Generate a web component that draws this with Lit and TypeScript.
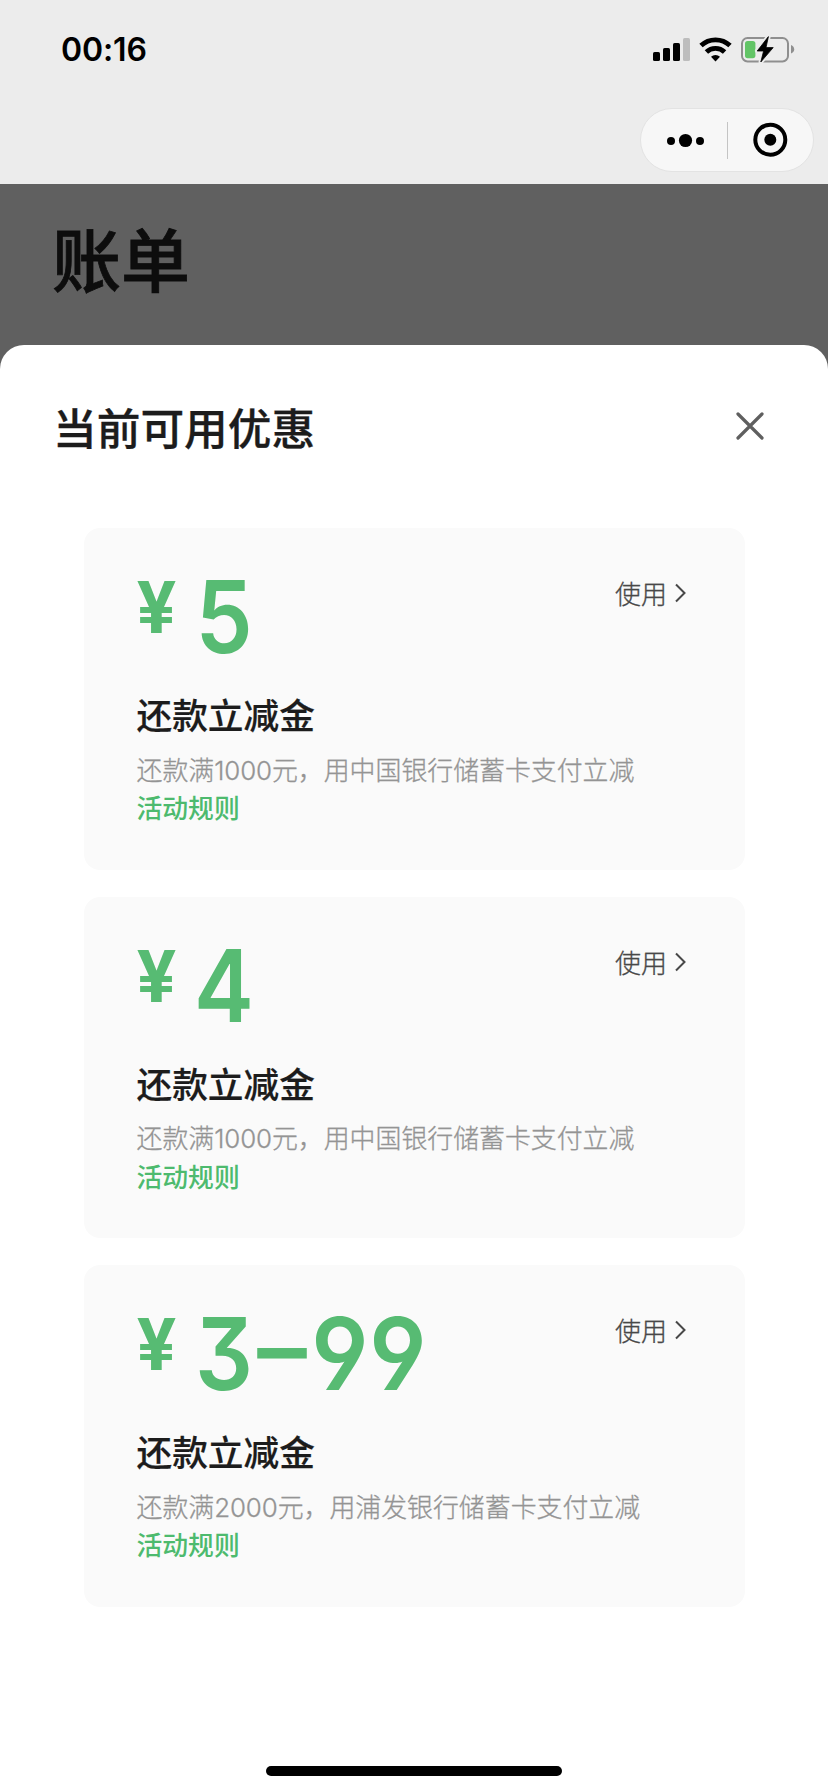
import { LitElement, html, css, svg } from "lit";
import { customElement, property } from "lit/decorators.js";
import { classMap } from "lit/directives/class-map.js";

interface Coupon {
  amount: string;
  title: string;
  before: string;
  threshold: string;
  after: string;
}

const coupons: Coupon[] = [
  { amount: "5", title: "还款立减金", before: "还款满", threshold: "1000", after: "元，用中国银行储蓄卡支付立减" },
  { amount: "4", title: "还款立减金", before: "还款满", threshold: "1000", after: "元，用中国银行储蓄卡支付立减" },
  { amount: "3–99", title: "还款立减金", before: "还款满", threshold: "2000", after: "元，用浦发银行储蓄卡支付立减" },
];

@customElement("status-bar")
class StatusBar extends LitElement {
  static styles = css`
    :host {
      display: flex;
      justify-content: space-between;
      height: 100px;
      padding: 0 30px 0 61px;
      box-sizing: border-box;
    }
    .time {
      font: 600 32px/40px Inter, "Liberation Sans", sans-serif;
      letter-spacing: -0.1px;
      margin-top: 30px;
      color: #000;
    }
    .icons {
      margin-top: 32px;
      width: 146px;
      height: 34px;
    }
  `;
  render() {
    return html`
      <span class="time">00:16</span>
      <svg class="icons" viewBox="652 32 146 34">
        ${svg`
          <rect x="653" y="52" width="7" height="9" rx="1.6" />
          <rect x="663" y="48" width="7" height="13" rx="1.6" />
          <rect x="673" y="43" width="7" height="18" rx="1.6" />
          <rect x="683" y="38" width="7" height="23" rx="1.6" fill="#bdbdbd" />
          <g fill="none" stroke="#000" stroke-width="4.8">
            <path d="M701 45.6 A21 21 0 0 1 730 45.6" />
            <path d="M706.4 52 A13 13 0 0 1 724.6 52" />
          </g>
          <path d="M711 56.8 A6.6 6.6 0 0 1 720 56.8 L715.5 61.4 Z" />
          <rect x="742" y="38" width="46" height="23.4" rx="5.5" fill="none" stroke="#8f8f8f" stroke-width="2" />
          <path d="M791 45 Q794.2 46.3 794.2 49.3 Q794.2 52.3 791 53.4 Z" fill="#8f8f8f" />
          <rect x="745" y="41" width="10.4" height="17.2" rx="2.6" fill="#62c466" />
          <path d="M768.4 36.6 L757.2 51 L763.6 51 L760.8 62 L773.2 47.6 L766 47.6 Z"
            stroke="#ececec" stroke-width="4.5" stroke-linejoin="round" />
          <path d="M768.4 36.6 L757.2 51 L763.6 51 L760.8 62 L773.2 47.6 L766 47.6 Z"
            stroke="#000" stroke-width="0.8" stroke-linejoin="round" />
        `}
      </svg>
    `;
  }
}

@customElement("mini-capsule")
class MiniCapsule extends LitElement {
  static styles = css`
    :host {
      display: flex;
      justify-content: flex-end;
      padding: 8px 14px 0 0;
    }
    .capsule {
      display: grid;
      grid-template-columns: 86px 1px 1fr;
      align-items: center;
      width: 174px;
      height: 64px;
      box-sizing: border-box;
      border: 1px solid #e3e3e3;
      border-radius: 32px;
      background: #f7f7f7;
    }
    .line {
      height: 37px;
      background: #c4c4c4;
    }
    .glyph {
      display: block;
      width: 100%;
      height: 62px;
    }
  `;
  render() {
    return html`
      <div class="capsule">
        <svg class="glyph" viewBox="0 0 86 62">
          <circle cx="30" cy="32" r="4" />
          <circle cx="44.5" cy="31.5" r="6.6" />
          <circle cx="59" cy="32" r="4" />
        </svg>
        <div class="line"></div>
        <svg class="glyph" viewBox="0 0 85 62">
          <circle cx="42.3" cy="30.7" r="15" fill="none" stroke="#000" stroke-width="4" />
          <circle cx="42.3" cy="30.7" r="6" />
        </svg>
      </div>
    `;
  }
}

@customElement("coupon-card")
class CouponCard extends LitElement {
  @property({ attribute: false }) coupon!: Coupon;

  static styles = css`
    :host {
      display: block;
      height: 341.5px;
      box-sizing: border-box;
      padding: 38px 58px 0 52.5px;
      border-radius: 16px;
      background: #fafafa;
    }
    .top {
      display: flex;
      justify-content: space-between;
      align-items: flex-start;
      height: 123px;
    }
    .price {
      display: flex;
      color: #57bb73;
    }
    .sign {
      width: 58px;
      font: 700 72px/86px Roboto, sans-serif;
      transform: scaleX(1.01);
      transform-origin: left;
    }
    .amount {
      display: flex;
      margin-left: 0.5px;
      font: 600 101px/100px Inter, "Liberation Sans", sans-serif;
      font-feature-settings: "cv04" 1, "cv09" 1, "case" 1;
    }
    .digit {
      width: 58px;
      display: flex;
      justify-content: center;
      transform: scaleX(0.9);
    }
    .digit.four {
      transform: scaleX(0.89);
    }
    .digit.nine {
      transform: scaleX(0.94);
    }
    .digit.dash {
      transform: scaleX(0.98);
    }
    .use {
      display: flex;
      align-items: center;
      gap: 7px;
      height: 44px;
      margin-top: 5px;
      font: 300 26px/44px "Noto Sans CJK SC", sans-serif;
      -webkit-text-stroke: 0.3px #484848;
      color: #484848;
    }
    .chevron {
      width: 13px;
      height: 22px;
    }
    .title {
      font: 500 35.7px/50px "Noto Sans CJK SC", sans-serif;
      -webkit-text-stroke: 0.2px #1c1c1c;
      color: #1c1c1c;
    }
    .desc {
      font: 300 25.9px/38px "Noto Sans CJK SC", sans-serif;
      -webkit-text-stroke: 0.3px #949494;
      color: #949494;
      margin-top: 10.5px;
      white-space: nowrap;
    }
    .num {
      font-family: Inter, sans-serif;
      letter-spacing: -0.1px;
    }
    .rule {
      font: 500 25.8px/38px "Noto Sans CJK SC", sans-serif;
      color: #4dba6e;
      margin-top: -1.5px;
    }
  `;
  render() {
    const c = this.coupon;
    return html`
      <div class="top">
        <div class="price">
          <span class="sign">¥</span>
          <span class="amount"
            >${[...c.amount].map(
              (d) =>
                html`<span class=${classMap({ digit: true, four: d === "4", nine: d === "9", dash: d === "–" })}>${d}</span>`
            )}</span
          >
        </div>
        <div class="use">
          <span>使用</span>
          <svg class="chevron" viewBox="0 0 13 22">
            <path d="M2 2.5 L10.5 11 L2 19.5" fill="none" stroke="#484848" stroke-width="2" />
          </svg>
        </div>
      </div>
      <div class="title">${c.title}</div>
      <div class="desc">${c.before}<span class="num">${c.threshold}</span>${c.after}</div>
      <div class="rule">活动规则</div>
    `;
  }
}

@customElement("app-root")
class AppRoot extends LitElement {
  static styles = css`
    :host {
      display: flex;
      flex-direction: column;
      width: 828px;
      height: 1792px;
      background: #606060;
      font-family: "Noto Sans CJK SC", sans-serif;
      overflow: hidden;
    }
    .header {
      height: 184px;
      background: #ececec;
    }
    .page-title {
      height: 161px;
      box-sizing: border-box;
      padding: 23px 0 0 52px;
      font: 500 69px/100px "Noto Sans CJK SC", sans-serif;
      -webkit-text-stroke: 0.8px #0d0d0d;
      color: #0d0d0d;
    }
    .sheet {
      flex: 1;
      display: flex;
      flex-direction: column;
      background: #fff;
      border-radius: 24px 24px 0 0;
    }
    .sheet-head {
      display: flex;
      justify-content: space-between;
      padding: 51px 62px 0 53px;
      height: 183px;
      box-sizing: border-box;
    }
    .sheet-title {
      font: 500 43.7px/60px "Noto Sans CJK SC", sans-serif;
      -webkit-text-stroke: 0.3px #1c1c1c;
      color: #1c1c1c;
    }
    .close {
      width: 32px;
      height: 32px;
      margin-top: 13.5px;
    }
    .list {
      display: flex;
      flex-direction: column;
      gap: 27.2px;
      padding: 0 83px 0 84px;
    }
    .home {
      width: 296px;
      height: 10px;
      border-radius: 5px;
      background: #000;
      margin: auto auto 16px;
    }
  `;
  render() {
    return html`
      <div class="header">
        <status-bar></status-bar>
        <mini-capsule></mini-capsule>
      </div>
      <div class="page-title">账单</div>
      <div class="sheet">
        <div class="sheet-head">
          <span class="sheet-title">当前可用优惠</span>
          <svg class="close" viewBox="0 0 32 32">
            <path d="M4 4 L28 28 M28 4 L4 28" stroke="#5f5f5f" stroke-width="3.2" stroke-linecap="round" />
          </svg>
        </div>
        <div class="list">${coupons.map((c) => html`<coupon-card .coupon=${c}></coupon-card>`)}</div>
        <div class="home"></div>
      </div>
    `;
  }
}
